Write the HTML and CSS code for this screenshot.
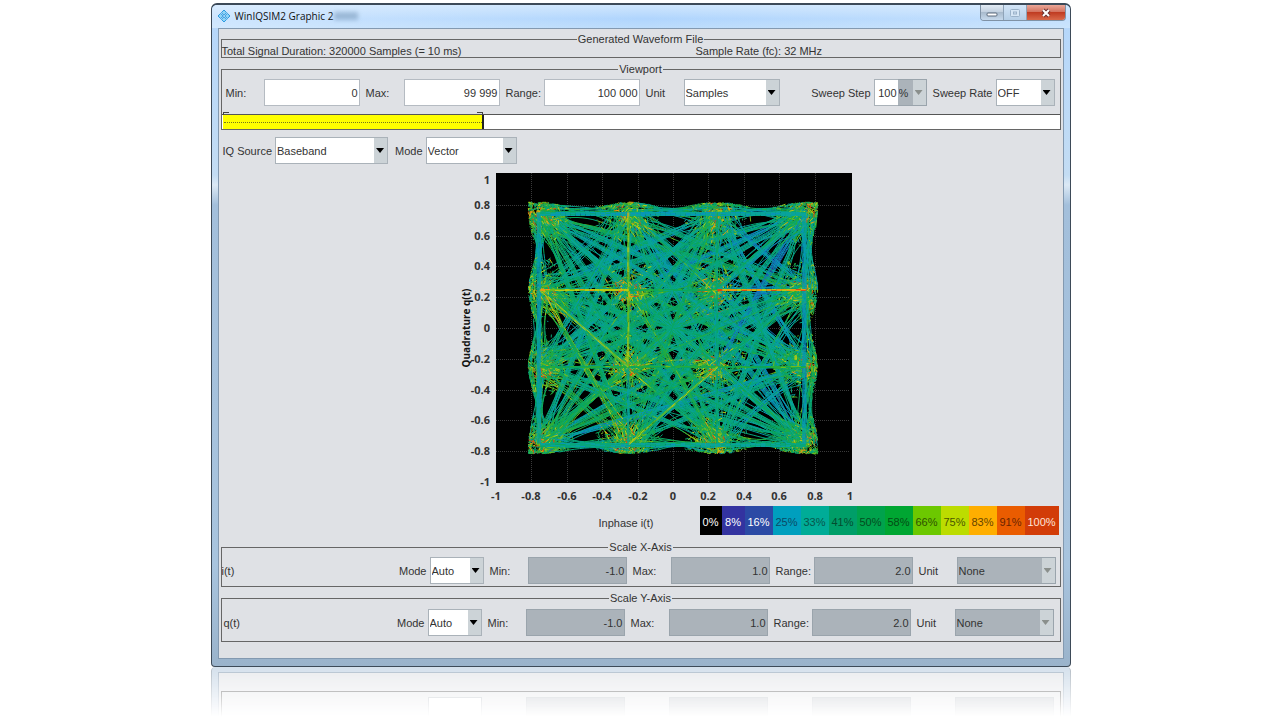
FILE: index.html
```html
<!DOCTYPE html>
<html lang="en">
<head>
  <meta charset="UTF-8" />
  <meta name="viewport" content="width=device-width, initial-scale=1.0"/>
  <title>WinIQSIM2 Graphic 2</title>
  <link rel="stylesheet" href="styles.css">
</head>
<body>
  <main class="window">
    <header class="titlebar">
      <svg class="app-icon" viewBox="0 0 14 14" aria-hidden="true">
        <g fill="#8fd4f6" stroke="#2f9be0" stroke-width="1">
          <path d="M7 1l2.6 2.6L7 6.2 4.4 3.6z"/>
          <path d="M3.6 4.4L6.2 7 3.6 9.6 1 7z"/>
          <path d="M10.4 4.4L13 7l-2.6 2.6L7.8 7z"/>
          <path d="M7 7.8l2.6 2.6L7 13l-2.6-2.6z"/>
        </g>
      </svg>
      <h1>WinIQSIM2 Graphic 2</h1>
      <span class="smudge"></span>
      <div class="window-buttons">
        <button class="win-btn" aria-label="Minimize">
          <svg viewBox="0 0 12 10"><rect x="1" y="5" width="10" height="3" rx="1" fill="#fff" stroke="#5c6b7c"/></svg>
        </button>
        <button class="win-btn dim" aria-label="Maximize">
          <svg viewBox="0 0 12 10"><rect x="1.500" y="1.500" width="9" height="7" rx="1" fill="#d6e6f5" stroke="#9bb2c9"/><rect x="4.500" y="4" width="3" height="2" fill="#cfe0f0" stroke="#9bb2c9"/></svg>
        </button>
        <button class="win-btn close" aria-label="Close">
          <svg viewBox="0 0 12 10"><path d="M3 2l6 6M9 2l-6 6" stroke="#6b3030" stroke-width="4"/><path d="M3 2l6 6M9 2l-6 6" stroke="#fff" stroke-width="2"/></svg>
        </button>
      </div>
    </header>

    <div class="client">
      <fieldset class="group file">
        <legend>Generated Waveform File</legend>
        <div class="file-info">
          <span>Total Signal Duration: 320000 Samples (= 10 ms)</span>
          <span>Sample Rate (fc): 32 MHz</span>
        </div>
      </fieldset>

      <fieldset class="group viewport">
        <legend>Viewport</legend>
        <div class="row">
          <label class="name" for="vpMin">Min:</label>
          <input class="num" type="text" id="vpMin" value="0">
          <label class="name" for="vpMax">Max:</label>
          <input class="num" type="text" id="vpMax" value="99 999">
          <label class="name" for="vpRange">Range:</label>
          <input class="num" type="text" id="vpRange" value="100 000">
          <label class="name" for="vpUnit">Unit</label>
          <span class="combo unit"><select id="vpUnit"><option>Samples</option></select></span>
          <label class="tight push" for="sweepStep">Sweep Step</label>
          <span class="step">
            <input type="text" id="sweepStep" value="100">
            <span class="combo percent off"><select aria-label="Step unit" disabled><option>%</option></select></span>
          </span>
          <label class="tight" for="sweepRate">Sweep Rate</label>
          <span class="combo rate"><select id="sweepRate"><option>OFF</option></select></span>
        </div>
        <div class="track"><div class="range" style="width: 31.3%"></div></div>
      </fieldset>

      <div class="row source">
        <label class="tight" for="iqSource">IQ Source</label>
        <span class="combo iq"><select id="iqSource"><option>Baseband</option></select></span>
        <label class="tight" for="viewMode">Mode</label>
        <span class="combo mode"><select id="viewMode"><option>Vector</option></select></span>
      </div>

      <svg class="chart" viewBox="0 0 408 336" role="img" aria-label="Vector diagram">
        <rect x="40" y="5" width="356" height="310" fill="#000"/>
        <g id="grid" stroke="#3a3a3a" stroke-dasharray="1 1"></g>
        <g id="traces" fill="none"></g>
        <g id="ticks" class="ticks"></g>
        <text class="axis" transform="translate(14 160) rotate(-90)" text-anchor="middle">Quadrature q(t)</text>
      </svg>

      <div class="scale-row">
        <span class="axis-name">Inphase i(t)</span>
        <ol class="density">
          <li class="d0">0%</li>
          <li class="d8">8%</li>
          <li class="d16">16%</li>
          <li class="d25">25%</li>
          <li class="d33">33%</li>
          <li class="d41">41%</li>
          <li class="d50">50%</li>
          <li class="d58">58%</li>
          <li class="d66">66%</li>
          <li class="d75">75%</li>
          <li class="d83">83%</li>
          <li class="d91">91%</li>
          <li class="d100">100%</li>
        </ol>
      </div>

      <fieldset class="group scale-x">
        <legend>Scale X-Axis</legend>
        <div class="row">
          <span class="signal">i(t)</span>
          <label class="tight" for="xMode">Mode</label>
          <span class="combo auto"><select id="xMode"><option>Auto</option></select></span>
          <label class="name" for="xMin">Min:</label>
          <input class="num" type="text" id="xMin" value="-1.0" disabled>
          <label class="name" for="xMax">Max:</label>
          <input class="num" type="text" id="xMax" value="1.0" disabled>
          <label class="name" for="xRange">Range:</label>
          <input class="num" type="text" id="xRange" value="2.0" disabled>
          <label class="name" for="xUnit">Unit</label>
          <span class="combo unit off"><select id="xUnit" disabled><option>None</option></select></span>
        </div>
      </fieldset>

      <fieldset class="group scale-y">
        <legend>Scale Y-Axis</legend>
        <div class="row">
          <span class="signal">q(t)</span>
          <label class="tight" for="yMode">Mode</label>
          <span class="combo auto"><select id="yMode"><option>Auto</option></select></span>
          <label class="name" for="yMin">Min:</label>
          <input class="num" type="text" id="yMin" value="-1.0" disabled>
          <label class="name" for="yMax">Max:</label>
          <input class="num" type="text" id="yMax" value="1.0" disabled>
          <label class="name" for="yRange">Range:</label>
          <input class="num" type="text" id="yRange" value="2.0" disabled>
          <label class="name" for="yUnit">Unit</label>
          <span class="combo unit off"><select id="yUnit" disabled><option>None</option></select></span>
        </div>
      </fieldset>
    </div>
  </main>

  <div class="reflection" aria-hidden="true">
    <div class="mirror">
      <div class="mirror-group">
        <i class="light"></i><i></i><i></i><i></i><i></i>
      </div>
    </div>
  </div>

  <script src="chart.js"></script>
</body>
</html>
```
FILE: styles.css
```css
body { margin: 0; padding: 3px 0 0 1px; background: #fff; color: #333; font-family: "Liberation Sans", Arial, sans-serif; font-size: 11px; line-height: 12px; }
h1 { margin: 0; font: 10px/16px "Open Sans", "Noto Sans", sans-serif; color: #111; }
input, select, button { font: inherit; color: inherit; box-sizing: border-box; margin: 0; border-radius: 0; }

/* window frame */
.window { box-sizing: border-box; max-width: 860px; margin: 0 auto; padding: 0 6px 7px; border: 1px solid #3d4a58; border-top-width: 2px; border-radius: 6px 6px 4px 4px; background: linear-gradient(#b4d6fb, #c3dcf3 170px, #dce9f5 180px, #a3bfdb 200px, #a8c4de 560px, #9ab3cb); }
.titlebar { display: flex; align-items: center; box-sizing: border-box; height: 23px; margin: 0 -6px; padding: 0 4px 2px 5px; border-radius: 5px 5px 0 0; background: linear-gradient(90deg, rgba(225,240,255,0.6), rgba(255,255,255,0) 50%, rgba(225,240,255,0.4)), linear-gradient(#cfe6fd, #b0d5fd 60%, #bcdcfb); }
.app-icon { width: 14px; height: 14px; margin-right: 4px; }
.smudge { width: 24px; height: 8px; margin-left: 1px; background: #7d9dbd; opacity: 0.6; filter: blur(2px); }
.window-buttons { display: flex; align-self: flex-start; margin-left: auto; border: 1px solid #7f92a6; border-top: 0; border-radius: 0 0 4px 4px; overflow: hidden; }
.win-btn { display: flex; align-items: center; justify-content: center; width: 23px; height: 15px; padding: 0; border: 0; border-right: 1px solid #8fa3b8; background: linear-gradient(#e3ecf5, #c3d1e0 45%, #a9bbcd 50%, #c6d9ec); }
.win-btn svg { width: 12px; height: 10px; }
.win-btn.dim { background: linear-gradient(#d3e5f7, #b5cee6); }
.win-btn.close { width: 38px; border-right: 0; background: linear-gradient(#eba798, #d4735f 45%, #c03c22 50%, #d9694a); }
.client { border: 1px solid #8399b0; background: #dfe1e5; padding: 4px 2px 16px; }

/* groups */
.group { min-width: 0; margin: 0; padding: 0; border: 1px solid #666; }
.group legend { margin: 0 auto; padding: 0 1px; }
.file-info { display: grid; grid-template-columns: 474fr 364fr; }
.viewport { margin-top: 5px; }
.viewport .row { padding: 4px 5px 8px 4px; }
.scale-x { margin-top: 6px; }
.scale-x .row { padding: 4px 4px 2px 0; }
.scale-y { margin-top: 5px; }
.scale-y .row { padding: 5px 6px 5px 2px; }

/* fields */
.row { display: flex; align-items: center; }
.name { width: 38px; margin-left: 6px; }
.viewport .name:first-child { margin-left: 0; }
.tight { margin-right: 3px; }
.push { margin-left: auto; }
.num { width: 96px; height: 27px; padding: 0 1px; border: 1px solid #b5bbc2; background: #fff; text-align: right; }
.num:disabled { width: 99px; background: #abb3ba; border-color: #9aa4ac; color: #333; }
.combo { position: relative; display: inline-flex; height: 27px; box-sizing: border-box; border: 1px solid #aab2b9; background: #fff; }
.combo select { width: 100%; padding: 0 14px 0 1px; border: 0; appearance: none; background: transparent; opacity: 1; }
.combo::before { content: ""; position: absolute; right: 0; top: 0; bottom: 0; width: 13px; background: #ccd3d7; }
.combo::after { content: ""; position: absolute; right: 3px; top: 10px; width: 8px; height: 5px; background: #000; clip-path: polygon(0 0, 100% 0, 50% 100%); pointer-events: none; }
.combo.off { background: #abb3ba; border-color: #9aa4ac; }
.combo.off select { color: #333; }
.combo.off::after { background: #8a8f8c; }
.unit { width: 96px; }
.unit.off { width: 99px; }
.rate { width: 59px; }
.iq { width: 113px; margin-right: 7px; }
.mode { width: 91px; }
.auto { width: 54px; }
.step { display: flex; margin-right: 6px; }
.step input { width: 24px; height: 27px; padding: 0 1px 0 0; border: 1px solid #aab2b9; border-right: 0; background: #fff; text-align: right; }
.combo.percent { width: 29px; border-left: 0; }
.signal { flex: 1; }
.source { margin: 7px 2px 4px; }

/* visible part of the waveform */
.track { height: 14px; padding-left: 1px; border-top: 1px solid #555; background: #fff; }
.range { position: relative; box-sizing: border-box; height: 14px; border-right: 2px solid #222; background: #ff0; }
.range::before { content: ""; position: absolute; left: 1px; right: 0; top: 7px; border-top: 1px dotted #77771a; }
.range::after { content: ""; position: absolute; left: 0; right: -1px; top: -3px; height: 3px; background: linear-gradient(90deg, #444 5px, transparent 5px, transparent calc(100% - 5px), #444 calc(100% - 5px)) top / 100% 1px no-repeat; border-left: 1px solid #444; border-right: 1px solid #444; box-sizing: border-box; }

/* chart */
.chart { display: block; width: 408px; max-width: 100%; margin: 0 0 0 calc(50% - 185px); }
.ticks, .axis { font: 700 11px "Open Sans", "Noto Sans", sans-serif; fill: #333; }
.axis { font: 700 10px "Open Sans", "Noto Sans", sans-serif; fill: #111; }
.scale-row { display: flex; align-items: flex-end; justify-content: flex-end; margin-top: 2px; }
.axis-name { margin-right: 46px; padding-bottom: 6px; }
.density { display: flex; margin: 0 2px 0 0; padding: 0; list-style: none; }
.density li { width: 28px; padding-top: 4px; line-height: 25px; text-align: center; color: #1a3a2a; }
.density .d0 { width: 22px; background: #000; color: #fff; }
.density .d8 { width: 23px; background: #3333a0; color: #fff; }
.density .d16 { background: #2b4aa5; color: #fff; }
.density .d25 { background: #009fbe; color: #0b4a66; }
.density .d33 { background: #00ac97; color: #08564c; }
.density .d41 { background: #009e68; color: #044c30; }
.density .d50 { background: #00a24c; color: #044c20; }
.density .d58 { background: #00a632; color: #044c14; }
.density .d66 { background: #6cc800; color: #2c5200; }
.density .d75 { background: #bcdc00; color: #4a5600; }
.density .d83 { background: #ffae00; color: #664400; }
.density .d91 { background: #ea5c00; color: #6a2400; }
.density .d100 { width: 34px; background: #d23c08; color: #ffe4d8; }

/* floor reflection under the window */
.reflection { box-sizing: border-box; max-width: 860px; height: 50px; margin: 0 auto; padding: 5px 6px 0; border: 1px solid #8291a0; border-width: 0 1px; border-radius: 4px 4px 0 0; background: #b9cce0; opacity: 0.6; overflow: hidden; -webkit-mask-image: linear-gradient(#000, transparent); mask-image: linear-gradient(#000, transparent); }
.mirror { height: 60px; padding: 18px 2px 0; border: 1px solid #8399b0; background: #dfe1e5; }
.mirror-group { display: flex; justify-content: flex-end; height: 40px; padding: 5px 6px 0; border: 1px solid #333; }
.mirror-group i { width: 97px; height: 27px; margin-left: 44px; border: 1px solid #9aa4ac; background: #abb3ba; }
.mirror-group .light { width: 52px; margin-left: 0; background: #fff; }
```
FILE: chart.js
```js
const NS = 'http://www.w3.org/2000/svg';
const CX = 217, CY = 160;    // origin of the plot
const SX = 177, SY = 154;    // pixels per unit
const COLORS = ['#2b49a8', '#1470b8', '#0796b8', '#08a39c', '#07a67c', '#0aa65e', '#23ac3c', '#6cbc1c', '#b8cc10', '#e89a10', '#dc4a10'];

let seed = 20;
function rand() {
  seed = (seed * 1664525 + 1013904223) % 4294967296;
  return seed / 4294967296;
}
function gauss() {
  return rand() + rand() + rand() + rand() - 2;
}
function add(parent, name, attrs, text) {
  const el = document.createElementNS(NS, name);
  for (const key in attrs) el.setAttribute(key, attrs[key]);
  if (text) el.textContent = text;
  parent.appendChild(el);
}

// grid lines and tick labels
const grid = document.getElementById('grid');
const ticks = document.getElementById('ticks');
for (let i = -5; i <= 5; i++) {
  const v = i / 5;
  const x = Math.round(CX + v * SX);
  const y = Math.round(CY - v * SY);
  if (Math.abs(i) < 5) {
    add(grid, 'path', {d: `M${x + 0.5} 5V315`});
    add(grid, 'path', {d: `M40 ${y + 0.5}H394`});
  }
  add(ticks, 'text', {x: x, y: 332, 'text-anchor': 'middle'}, String(v));
  add(ticks, 'text', {x: 34, y: i === 5 ? 16 : y + 4, 'text-anchor': 'end'}, String(v));
}

// transitions between the 16 constellation points
const LAYERS = 14;
const buckets = [];
for (let i = 0; i < LAYERS; i++) buckets.push(COLORS.map(() => ''));

// the outline bulges at the points and dips between them
function limit(v) {
  return 0.802 - 0.016 * Math.cos(v * Math.PI * 4);
}
function clamp(p) {
  const i = (p[0] - CX) / SX, q = (p[1] - CY) / SY;
  const mi = limit(Math.min(0.75, Math.abs(q))), mq = limit(Math.min(0.75, Math.abs(i)));
  const ci = Math.abs(i) > mi ? Math.sign(i) * (mi - rand() * 0.02) : i;
  const cq = Math.abs(q) > mq ? Math.sign(q) * (mq - rand() * 0.02) : q;
  return [CX + ci * SX, CY + cq * SY];
}
function segment(a, b, color, layer) {
  const c = Math.max(0, Math.min(COLORS.length - 1, Math.round(color)));
  buckets[layer][c] += `M${a[0].toFixed(1)} ${a[1].toFixed(1)}L${b[0].toFixed(1)} ${b[1].toFixed(1)}`;
}
// walks from a to b, offset sideways by start/mid/end pixels
function trace(a, b, start, mid, end, base, heat, layer) {
  const dx = b[0] - a[0], dy = b[1] - a[1];
  const len = Math.hypot(dx, dy);
  const nx = -dy / len, ny = dx / len;
  const steps = Math.max(4, Math.round(len / 5));
  let last = null;
  for (let s = 0; s <= steps; s++) {
    const t = s / steps;
    const da = t * len, db = (1 - t) * len;
    const off = mid + (start - mid) * Math.exp(-da * da / 900) + (end - mid) * Math.exp(-db * db / 900);
    const next = clamp([a[0] + dx * t + nx * off, a[1] + dy * t + ny * off]);
    const near = Math.max(0, 1 - Math.min(da, db) / 45);
    if (last) segment(last, next, base + gauss() * 0.8 + near * heat * rand() * rand(), layer);
    last = next;
  }
}
function anyLayer() {
  return Math.floor(rand() * (LAYERS - 1));
}

const nodes = [];
[-0.75, -0.25, 0.25, 0.75].forEach(q => [-0.75, -0.25, 0.25, 0.75].forEach(i => nodes.push([CX + i * SX, CY - q * SY])));

nodes.forEach((a, ai) => nodes.forEach((b, bi) => {
  if (bi <= ai) return;
  const dx = b[0] - a[0], dy = b[1] - a[1];
  const len = Math.hypot(dx, dy);
  const straight = Math.abs(dx) < 1 || Math.abs(dy) < 1;
  if (straight && len > 100) return;
  const right = (a[0] + b[0]) / 2 > CX + 10;
  const upper = (a[1] + b[1]) / 2 < CY - 10;
  const bundle = (right ? 2.8 : 4) + (upper ? -0.7 : 0.3) + gauss() * 1.3;
  for (let n = 0; n < 10; n++) {
    const line = bundle + gauss() * 0.8 + (rand() < 0.1 ? 2 : 0);
    // most transitions share a narrow lane, a few stray from it
    const mid = n < 7 ? (n - 3) * 0.7 : gauss() * 5;
    const ax = [a[0] + gauss() * 5, a[1] + gauss() * 5];
    const bx = [b[0] + gauss() * 5, b[1] + gauss() * 5];
    trace(n < 7 ? a : ax, n < 7 ? b : bx, gauss() * 12, mid, gauss() * 12, line, right ? 6 : 8, anyLayer());
  }
}));

// overshoot along the outer edges
for (let n = 0; n < 90; n++) {
  const side = n % 4;
  const s = side < 2 ? 1 : -1;
  const from = -0.75 + Math.floor(rand() * 3) * 0.5;
  const at = v => side % 2 ? [CX + s * 0.765 * SX, CY + v * SY] : [CX + v * SX, CY + s * 0.765 * SY];
  trace(at(from), at(from + 0.5), gauss() * 9, gauss() * 3, gauss() * 9, 3.3 + gauss(), 6, anyLayer());
}

// single samples around each point
nodes.forEach(a => {
  for (let n = 0; n < 420; n++) {
    const r = rand() * 33, angle = rand() * Math.PI * 2;
    const p = clamp([a[0] + r * Math.cos(angle), a[1] + r * Math.sin(angle)]);
    const q = clamp([p[0] + gauss() * 4, p[1] + gauss() * 4]);
    const dark = rand() < 0.12 && r > 8;
    if (dark) continue;
    segment(p, q, 3 + rand() * 5 + (r < 14 ? rand() * 3.5 : 0), anyLayer());
  }
});

// the main rows and columns stay visible on top
const straightLines = [
  [-0.75, 0.25, -0.25, 0.25, 7.6], [-0.25, 0.25, 0.25, 0.25, 5], [0.25, 0.25, 0.75, 0.25, 8.6],
  [-0.75, -0.25, 0.75, -0.25, 5.5], [-0.25, 0.75, -0.25, -0.25, 7.2], [-0.25, -0.25, -0.25, -0.75, 3],
  [0.25, 0.75, 0.25, -0.75, 4], [-0.75, 0.75, -0.75, -0.75, 2.4],
  [0.75, 0.75, 0.75, -0.75, 2], [-0.75, 0.75, 0.75, 0.75, 2.8], [-0.75, -0.75, 0.75, -0.75, 3.4],
  [-0.75, 0.25, -0.25, -0.25, 7.2], [-0.25, -0.75, 0.25, -0.25, 7.2]
];
straightLines.forEach(l => {
  const edge = (Math.abs(l[0]) === 0.75 && l[0] === l[2]) || (Math.abs(l[1]) === 0.75 && l[1] === l[3]);
  const a = [CX + l[0] * SX, CY - l[1] * SY], b = [CX + l[2] * SX, CY - l[3] * SY];
  for (let n = 0; n < (edge ? 4 : 2); n++) {
    trace(a, b, n, n, n, l[4], 2, LAYERS - 1);
  }
});

const traces = document.getElementById('traces');
buckets.forEach(layer => layer.forEach((d, c) => {
  if (d) add(traces, 'path', {d: d, stroke: COLORS[c], 'stroke-width': 1});
}));
```
